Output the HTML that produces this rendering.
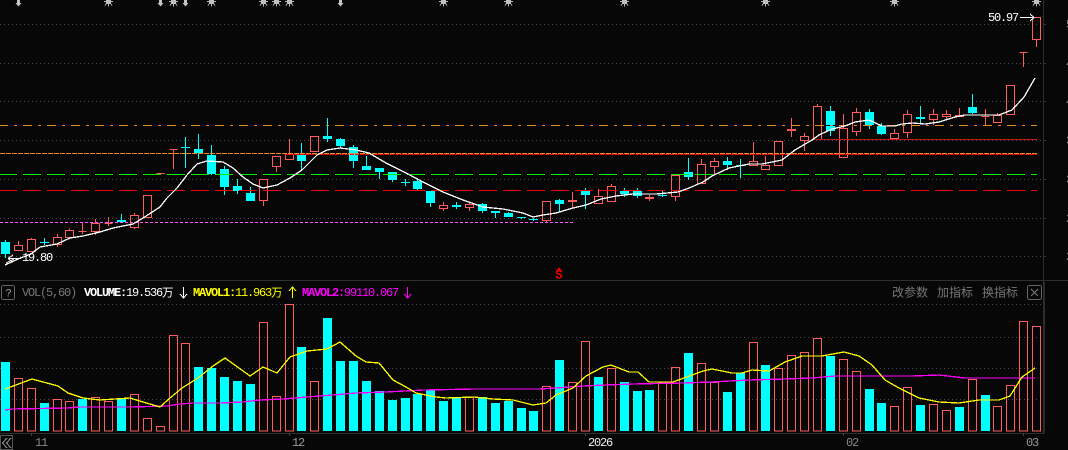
<!DOCTYPE html>
<html lang="zh">
<head>
<meta charset="utf-8">
<title>K线图</title>
<style>
html,body{margin:0;padding:0;background:#070707;width:1068px;height:450px;overflow:hidden}
svg{display:block}
text{font-family:"Liberation Mono","Noto Sans CJK SC",monospace;font-size:11px;letter-spacing:-.6px}
.num{font-size:12px;letter-spacing:-1.2px}
.cn{font-family:"Liberation Sans","Noto Sans CJK SC",sans-serif;font-size:12px;letter-spacing:0;fill:#777}
.wan{font-family:"Noto Sans CJK SC",sans-serif;font-size:11.5px;letter-spacing:0}
</style>
</head>
<body>
<svg width="1068" height="450" viewBox="0 0 1068 450" xmlns="http://www.w3.org/2000/svg">
<defs>
<g id="st" shape-rendering="crispEdges"><path d="M-2.500 0H2.500V4H-2.500Z" fill="#c4c4c4"/><path d="M-4.500 1.500H4.500M0 0V6.500M-3.500 5.500L-2 3.500M3.500 5.500L2 3.500" stroke="#bbb" fill="none"/></g>
<path id="ar" d="M-1.500 0H1.500V3H3L0 6.500L-3 3H-1.500Z" fill="#c4c4c4"/>
</defs>
<rect width="1068" height="450" fill="#070707"/>

<!-- grid -->
<g shape-rendering="crispEdges">
<path d="M0 24.500H1043M0 63.500H1043M0 101.500H1043M0 140.500H1043M0 179.500H1043M0 218.500H1043M0 256.500H1043M0 304.500H1043M0 337.500H1043M0 368.500H1043M0 399.500H1043" stroke="#4a4a4a" stroke-dasharray="1 3" fill="none"/>
<path d="M1043.500 0V433M1044.500 282V433" stroke="#2c2c2c" fill="none"/>
<path d="M1043 24.500h3M1043 63.500h3M1043 101.500h3M1043 140.500h3M1043 179.500h3M1043 218.500h3M1043 256.500h3" stroke="#333" fill="none"/>
<path d="M0 280.500H1068M0 433.500H1044" stroke="#303030" fill="none"/>
<path d="M31.500 433V436M289.500 433V436M585.500 433V436M843.500 433V436M1023.500 433V436" stroke="#444" fill="none"/>

<!-- candles red -->
<path fill="none" stroke="#ff5c5c" d="M14.500 245.500h8v5h-8zM18.500 241V245M27.500 239.500h8v12h-8zM31.500 238V239M53.500 237.500h8v7h-8zM57.500 234V237M57.500 245V247M65.500 230.500h8v7h-8zM69.500 228.500V230M78.500 231.500h8M82.500 223V234M91.500 223.500h8v8h-8zM95.500 219V223M95.500 232V235M104.500 223.500h8M108.500 217V226M130.500 215.500h8v12h-8zM134.500 213V215M134.500 228V229M143.500 195.500h8v22h-8zM156.500 173.500h8M169.500 149.500h8M173.500 149V169M259.500 179.500h8v21h-8zM263.500 201V206M272.500 156.500h8v10h-8zM276.500 167V172M285.500 154.500h8v5h-8zM289.500 139V154M310.500 136.500h8v15h-8zM439.500 205.500h8v3h-8zM443.500 202V205M443.500 209V211M465.500 204.500h8v3h-8zM469.500 203V204M469.500 208V211M542.500 201.500h8v19h-8zM546.500 221V222M568.500 200.500h8v1h-8zM572.500 192V208M594.500 196.500h8v7h-8zM598.500 189V196M607.500 186.500h8v15h-8zM611.500 184V186M645.500 197.500h8v1h-8zM649.500 195V201M671.500 175.500h8v21h-8zM675.500 197V201M697.500 164.500h8v19h-8zM701.500 159V164M710.500 161.500h8v5h-8zM714.500 158V161M714.500 167V174M749.500 161.500h8v4h-8zM753.500 142V161M761.500 165.500h8v4h-8zM765.500 156V165M774.500 141.500h8v24h-8zM787.500 129.500h8v1h-8zM791.500 118V137M800.500 136.500h8v4h-8zM804.500 133V136M804.500 141V151M813.500 106.500h8v33h-8zM817.500 104V106M839.500 128.500h8v29h-8zM843.500 114V128M852.500 112.500h8v19h-8zM856.500 108V112M856.500 132V136M890.500 133.500h8v5h-8zM894.500 129V133M903.500 114.500h8v18h-8zM907.500 110V114M907.500 133V138M929.500 114.500h8v5h-8zM933.500 109V114M933.500 120V125M942.500 114.500h8v2h-8zM946.500 110V114M946.500 117V120M955.500 115.500h8v1h-8zM959.500 108V115M981.500 116.500h8M985.500 109V126M993.500 115.500h8v7h-8zM997.500 113V115M1006.500 85.500h8v29h-8zM1019.500 52.500h8M1023.500 52V67M1032.500 17.500h8v22h-8zM1036.500 40V47"/>

<!-- candles cyan wicks -->
<path fill="none" stroke="#00ffff" d="M5.500 240V258M44.500 238V245M121.500 214V223M185.500 137V168M198.500 134V159M211.500 145V175M224.500 166V195M237.500 179V194M250.500 187V201M301.500 143V170M327.500 118V142M340.500 138V148M353.500 145V168M366.500 156V170M379.500 168V179M392.500 172V182M405.500 179V186M417.500 179V190M430.500 191V207M456.500 202V209M482.500 203V213M495.500 211V218M508.500 212V217M521.500 217V219M533.500 218V221M559.500 199V212M585.500 188V209M624.500 188V197M637.500 188V198M662.500 191V197M688.500 158V180M727.500 157V170M740.500 159V178M830.500 106V136M869.500 109V129M881.500 123V135M920.500 106V123M972.500 94V114"/>
<!-- candles cyan bodies -->
<path fill="#00ffff" d="M1 242h9v12h-9zM40 242h9v1h-9zM117 220h9v2h-9zM181 147h9v1h-9zM194 149h9v4h-9zM207 155h9v19h-9zM220 169h9v18h-9zM233 186h9v5h-9zM246 193h9v8h-9zM297 155h9v6h-9zM323 136h9v3h-9zM336 139h9v7h-9zM349 147h9v14h-9zM362 166h9v4h-9zM375 168h9v4h-9zM388 172h9v8h-9zM401 182h9v1h-9zM413 181h9v8h-9zM426 191h9v12h-9zM452 205h9v2h-9zM478 204h9v7h-9zM491 211h9v2h-9zM504 213h9v4h-9zM517 217h9v1h-9zM529 219h9v1h-9zM555 200h9v4h-9zM581 191h9v4h-9zM620 191h9v3h-9zM633 191h9v5h-9zM658 195h9v1h-9zM684 172h9v5h-9zM723 161h9v4h-9zM736 165h9v1h-9zM826 111h9v14h-9zM826 126h9v5h-9zM865 112h9v13h-9zM877 126h9v8h-9zM916 117h9v2h-9zM968 107h9v6h-9z"/>

<!-- horizontal levels -->
<path d="M0 125.500H1037" stroke="#e8892a" stroke-dasharray="9 6 3 6" stroke-dashoffset="1" fill="none"/>
<path d="M285 154.500H1037" stroke="#f00" stroke-dasharray="4 1" fill="none"/>
<path d="M0 153.500H1037" stroke="#f08a28" stroke-dasharray="5 1" fill="none"/>
<path d="M0 174.500H1037" stroke="#00f000" stroke-dasharray="18 6" stroke-dashoffset="1" fill="none"/>
<path d="M0 190.500H1037" stroke="#f00000" stroke-dasharray="18 6" stroke-dashoffset="1" fill="none"/>
<path d="M0 222.500H573" stroke="#ff55ff" stroke-dasharray="3 2" fill="none"/>
<path d="M814 139.500H1037" stroke="#c81818" fill="none"/>

<!-- MA white -->
<polyline fill="none" stroke="#fff" stroke-width="1.3" points="5,265 18,259 31,254 40,247 57,244 70,238 83,236 100,232 113,228 133,224 143,218 160,207 167,198 177,188 187,175 197,164 207,161 223,162 233,168 243,177 253,184 263,188 277,185 290,178 302,170 317,155 327,150 340,148 356,150 369,153 386,163 406,173 423,182 443,192 463,200 483,207 503,209 523,213 533,217 543,215 556,213 573,208 586,205 601,199 616,196 633,194 656,194 678,192 689,188 703,182 712,176 729,168 749,164 762,164 782,160 795,150 812,140 819,135 832,129 845,126 855,122 869,120 882,126 895,126 902,124 912,123 925,124 939,122 955,117 965,115 999,115 1012,110 1024,97 1035,78"/>

<!-- Volume red -->
<path fill="none" stroke="#ff5c5c" d="M14.500 378.500h8V431h-8zM27.500 388.500h8V431h-8zM53.500 399.500h8V431h-8zM65.500 401.500h8V431h-8zM91.500 397.500h8V431h-8zM104.500 401.500h8V431h-8zM130.500 394.500h8V431h-8zM143.500 418.500h8V431h-8zM156.500 426.500h8V431h-8zM169.500 335.500h8V431h-8zM181.500 343.500h8V431h-8zM259.500 322.500h8V431h-8zM272.500 396.500h8V431h-8zM285.500 304.500h8V431h-8zM310.500 381.500h8V431h-8zM465.500 397.500h8V431h-8zM542.500 386.500h8V431h-8zM568.500 382.500h8V431h-8zM581.500 341.500h8V431h-8zM607.500 368.500h8V431h-8zM658.500 382.500h8V431h-8zM671.500 367.500h8V431h-8zM697.500 363.500h8V431h-8zM710.500 382.500h8V431h-8zM749.500 342.500h8V431h-8zM774.500 368.500h8V431h-8zM787.500 355.500h8V431h-8zM800.500 352.500h8V431h-8zM813.500 338.500h8V431h-8zM839.500 359.500h8V431h-8zM852.500 371.500h8V431h-8zM890.500 406.500h8V431h-8zM903.500 387.500h8V431h-8zM929.500 404.500h8V431h-8zM942.500 410.500h8V431h-8zM968.500 379.500h8V431h-8zM993.500 406.500h8V431h-8zM1006.500 385.500h8V431h-8zM1019.500 321.500h8V431h-8zM1032.500 326.500h8V431h-8z"/>
<!-- Volume cyan -->
<path fill="#00ffff" d="M1 362h9V431h-9zM40 403h9V431h-9zM78 399h9V431h-9zM117 398h9V431h-9zM194 367h9V431h-9zM207 368h9V431h-9zM220 377h9V431h-9zM233 381h9V431h-9zM246 384h9V431h-9zM297 347h9V431h-9zM323 318h9V431h-9zM336 361h9V431h-9zM349 361h9V431h-9zM362 381h9V431h-9zM375 391h9V431h-9zM388 400h9V431h-9zM401 398h9V431h-9zM413 394h9V431h-9zM426 390h9V431h-9zM439 401h9V431h-9zM452 398h9V431h-9zM478 397h9V431h-9zM491 403h9V431h-9zM504 401h9V431h-9zM517 408h9V431h-9zM529 411h9V431h-9zM555 360h9V431h-9zM594 377h9V431h-9zM620 382h9V431h-9zM633 391h9V431h-9zM645 390h9V431h-9zM684 353h9V431h-9zM723 392h9V431h-9zM736 373h9V431h-9zM761 365h9V431h-9zM826 356h9V431h-9zM865 389h9V431h-9zM877 403h9V431h-9zM916 405h9V431h-9zM955 407h9V431h-9zM981 395h9V431h-9z"/>

<!-- MAVOL2 -->
<polyline fill="none" stroke="#ff00ff" stroke-width="1.3" points="5,410 13,409 67,408 80,407 130,407 167,406 180,404 193,403 220,403 243,402 260,400 283,399 307,397 333,395 356,393 386,392 424,390 476,389 539,389 556,388 583,386 606,385 633,384 683,383 712,382 749,380 785,379 812,378 835,376 912,376 939,375 965,378 1035,378"/>
<!-- MAVOL1 -->
<polyline fill="none" stroke="#ffff00" stroke-width="1.3" points="5,389 32,379 58,386 68,393 83,398 100,400 130,398 143,402 160,407 170,398 182,388 198,378 213,366 225,358 250,376 263,367 277,373 290,357 307,351 327,349 340,342 356,356 366,362 379,363 393,380 406,387 416,393 436,397 446,398 474,397 493,399 513,400 533,405 546,403 556,395 573,388 586,376 603,367 611,365 629,372 638,372 649,382 673,382 703,371 712,369 732,373 742,373 752,370 769,371 785,362 802,356 822,356 844,352 859,356 872,365 885,380 899,388 919,398 939,402 959,403 979,400 999,400 1010,396 1022,377 1035,368"/>

<!-- label arrows -->
<path fill="none" stroke="#fff" d="M8 258.500H21M8 258.500L13 255M8 258.500L13 262M6 263L14 259M1020 17.500H1034M1030 14L1034 17.500L1030 21M183.500 287V298M180 294L183.500 298L187 294"/>
<path fill="none" stroke="#ffff00" d="M292.500 287V298M289 291L292.500 287L296 291"/>
<path fill="none" stroke="#ff00ff" d="M407.500 287V298M404 294L407.500 298L411 294"/>
<rect x="1.500" y="285.500" width="13" height="14" rx="2" fill="none" stroke="#666"/>
<rect x="1027.500" y="285.500" width="14" height="14" rx="2" fill="none" stroke="#666"/>
<path d="M1031 289L1038 296M1038 289L1031 296" stroke="#777" fill="none"/>
<rect x="0.500" y="435.500" width="12" height="14" fill="none" stroke="#555"/>
<path d="M7 438L2.500 443L7 448M11 438L6.500 443L11 448" stroke="#999" fill="none"/>
<path d="M556 271L559 267L562 271Z" fill="#e80000"/>
</g>

<!-- top markers -->
<g>
<use href="#st" x="108.500"/><use href="#st" x="173.500"/><use href="#st" x="211.500"/><use href="#st" x="263.500"/><use href="#st" x="276.500"/><use href="#st" x="289.500"/><use href="#st" x="443.500"/><use href="#st" x="508.500"/><use href="#st" x="624.500"/><use href="#st" x="765.500"/><use href="#st" x="894.500"/><use href="#st" x="1036.500"/>
<use href="#ar" x="18.500"/><use href="#ar" x="160.500"/><use href="#ar" x="185.500"/><use href="#ar" x="340.500"/>
</g>

<!-- text -->
<text x="988" y="21" fill="#fff" class="num">50.97</text>
<text x="22" y="261" fill="#fff" class="num">19.80</text>
<text x="555" y="278.500" fill="#e80000" font-weight="bold" style="font-size:13px;letter-spacing:0">S</text>

<text x="8.500" y="296.500" fill="#999" text-anchor="middle" style="letter-spacing:0">?</text>
<text x="22" y="296" fill="#777" class="num">VOL(5,60)</text>
<text x="84" y="296" fill="#fff" class="num"><tspan font-weight="bold">VOLUME:</tspan>19.536</text>
<text x="162" y="296.500" fill="#fff" class="wan">万</text>
<text x="193" y="296" fill="#ffff00" class="num"><tspan font-weight="bold">MAVOL1:</tspan>11.963</text>
<text x="271" y="296.500" fill="#ffff00" class="wan">万</text>
<text x="302" y="296" fill="#ff00ff" class="num"><tspan font-weight="bold">MAVOL2:</tspan>99110.067</text>

<text x="892" y="296.500" class="cn">改参数</text>
<text x="937" y="296.500" class="cn">加指标</text>
<text x="982" y="296.500" class="cn">换指标</text>

<text x="35" y="446" fill="#888" class="num">11</text>
<text x="292" y="446" fill="#999" class="num">12</text>
<text x="588" y="446" fill="#eee" class="num">2026</text>
<text x="846" y="446" fill="#888" class="num">02</text>
<text x="1026" y="446" fill="#999" class="num">03</text>

<text x="1066" y="28" fill="#888" class="num">50</text>
<text x="1066" y="67" fill="#888" class="num">45</text>
<text x="1066" y="105" fill="#888" class="num">40</text>
<text x="1066" y="144" fill="#888" class="num">35</text>
<text x="1066" y="183" fill="#888" class="num">30</text>
<text x="1066" y="222" fill="#888" class="num">25</text>
<text x="1066" y="260" fill="#888" class="num">20</text>
</svg>
</body>
</html>
